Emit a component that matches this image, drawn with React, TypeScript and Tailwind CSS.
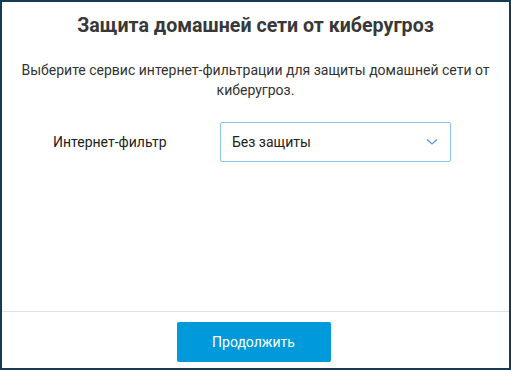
import type { FC } from "react";

const Chevron: FC = () => (
    <svg width="12" height="8" viewBox="0 0 12 8" fill="none">
        <polyline points="1,1.5 6,6 11,1.5" stroke="#5f9bd3" strokeWidth="1.3" />
    </svg>
);

export default function App() {
    return (
        <div
            className="w-[511px] h-[370px] border-2 border-[#153b55] bg-white flex flex-col text-[#333333]"
            style={{ fontFamily: "Roboto, 'Noto Sans', sans-serif" }}
        >
            <div className="flex-1 flex flex-col">
                <h1 className="text-center text-[19.6px] font-bold leading-[24px] mt-[12px] text-[#383838]">
                    Защита домашней сети от киберугроз
                </h1>
                <p className="text-center text-[14px] leading-[20px] mt-[22px] px-[18px]">
                    Выберите сервис интернет-фильтрации для защиты домашней сети от киберугроз.
                </p>
                <div className="flex items-center mt-[22px] pl-[51px]">
                    <span className="w-[167px] text-[14px] text-[#222222]">Интернет-фильтр</span>
                    <div className="w-[231px] h-[40px] border border-[#86c8ea] rounded-[2px] flex items-center justify-between pl-[11px] pr-[12px]">
                        <span className="text-[14px] text-[#222222]">Без защиты</span>
                        <Chevron />
                    </div>
                </div>
            </div>
            <div className="h-[57px] border-t border-[#dae2ec] flex justify-center pt-[10px] pr-[4px]">
                <button className="w-[154px] h-[40px] bg-[#0099d9] rounded-[2px] text-white text-[14px]">
                    Продолжить
                </button>
            </div>
        </div>
    );
}
